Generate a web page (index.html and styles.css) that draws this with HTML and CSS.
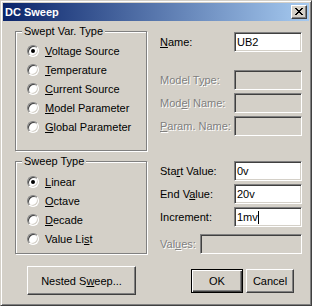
FILE: index.html
```html
<!DOCTYPE html>
<html lang="en">
<head>
  <meta charset="UTF-8" />
  <title>DC Sweep</title>
  <link rel="stylesheet" href="styles.css">
</head>
<body>
  <div class="window">
    <div class="titlebar">
      <span class="title">DC Sweep</span>
      <span class="close">
        <svg width="8" height="7" viewBox="0 0 8 7" shape-rendering="crispEdges">
          <path d="M0 0h2v1h1v1h2v-1h1v-1h2v1h-1v1h-1v1h-1v1h1v1h1v1h1v1h-2v-1h-1v-1h-2v1h-1v1h-2v-1h1v-1h1v-1h1v-1h-1v-1h-1v-1h-1z" fill="#000"/>
        </svg>
      </span>
    </div>
    <div class="client">
      <div class="col-left">
        <div class="group group-var">
          <span class="legend">Swept Var. Type</span>
          <div class="radio-row"><span class="radio checked"></span><span><u>V</u>oltage Source</span></div>
          <div class="radio-row"><span class="radio"></span><span><u>T</u>emperature</span></div>
          <div class="radio-row"><span class="radio"></span><span><u>C</u>urrent Source</span></div>
          <div class="radio-row"><span class="radio"></span><span><u>M</u>odel Parameter</span></div>
          <div class="radio-row"><span class="radio"></span><span><u>G</u>lobal Parameter</span></div>
        </div>
        <div class="group group-sweep">
          <span class="legend">Sweep Type</span>
          <div class="radio-row"><span class="radio checked"></span><span><u>L</u>inear</span></div>
          <div class="radio-row"><span class="radio"></span><span><u>O</u>ctave</span></div>
          <div class="radio-row"><span class="radio"></span><span><u>D</u>ecade</span></div>
          <div class="radio-row"><span class="radio"></span><span>Value Li<u>s</u>t</span></div>
        </div>
        <button class="btn btn-nested" type="button">Nested S<u>w</u>eep...</button>
      </div>
      <div class="col-right">
        <div class="field field-name"><span class="lbl"><u>N</u>ame:</span><span class="edit">UB2</span></div>
        <div class="field field-mtype disabled"><span class="lbl">Model T<u>y</u>pe:</span><span class="edit"></span></div>
        <div class="field disabled"><span class="lbl">Mod<u>e</u>l Name:</span><span class="edit"></span></div>
        <div class="field disabled"><span class="lbl"><u>P</u>aram. Name:</span><span class="edit"></span></div>
        <div class="field field-start"><span class="lbl">Sta<u>r</u>t Value:</span><span class="edit">0v</span></div>
        <div class="field"><span class="lbl">End V<u>a</u>lue:</span><span class="edit">20v</span></div>
        <div class="field"><span class="lbl">Increment:</span><span class="edit">1mv<span class="caret"></span></span></div>
        <div class="field field-values disabled"><span class="lbl">Val<u>u</u>es:</span><span class="edit edit-wide"></span></div>
        <div class="actions">
          <button class="btn btn-default btn-ok" type="button">OK</button>
          <button class="btn btn-cancel" type="button">Cancel</button>
        </div>
      </div>
    </div>
  </div>
</body>
</html>
```

FILE: styles.css
```css
html, body {
  margin: 0;
  padding: 0;
  background: #d4d0c8;
}
body {
  font-family: "Liberation Sans", Arial, sans-serif;
  font-size: 11px;
  color: #000;
}
.window {
  width: 312px;
  height: 306px;
  box-sizing: border-box;
  background: #d4d0c8;
  border: 1px solid;
  border-color: #d4d0c8 #404040 #404040 #d4d0c8;
  box-shadow: inset 1px 1px 0 #fff, inset -1px -1px 0 #808080;
  padding: 2px;
}
.titlebar {
  height: 18px;
  display: flex;
  align-items: center;
  justify-content: space-between;
  padding: 0 2px;
  background: linear-gradient(90deg, #0a246a 0%, #a6caf0 100%);
}
.title {
  color: #fff;
  font-weight: bold;
  font-size: 11px;
}
.close {
  width: 16px;
  height: 14px;
  box-sizing: border-box;
  display: flex;
  align-items: center;
  justify-content: center;
  background: #d4d0c8;
  border: 1px solid;
  border-color: #fff #404040 #404040 #fff;
  box-shadow: inset -1px -1px 0 #808080;
  padding-bottom: 1px;
}
.close svg {
  display: block;
}
.client {
  display: flex;
  padding-left: 12px;
}
.col-left {
  width: 132px;
  display: flex;
  flex-direction: column;
}
.group {
  position: relative;
  box-sizing: border-box;
  border: 1px solid #808080;
  box-shadow: inset 1px 1px 0 #fff, 1px 1px 0 #fff;
  padding-left: 11px;
}
.group-var {
  margin-top: 10px;
  height: 120px;
  padding-top: 9px;
}
.group-sweep {
  margin-top: 10px;
  height: 93px;
  padding-top: 10px;
}
.legend {
  position: absolute;
  top: -7px;
  left: 6px;
  padding: 0 2px;
  background: #d4d0c8;
  line-height: 13px;
}
.radio-row {
  height: 19px;
  display: flex;
  align-items: center;
  gap: 6px;
}
.radio {
  position: relative;
  width: 12px;
  height: 12px;
  box-sizing: border-box;
  border-radius: 50%;
  border: 1px solid;
  border-color: #808080 #fff #fff #808080;
  box-shadow: inset 1px 1px 0 #404040, inset -1px -1px 0 #d4d0c8;
  background: #fff;
}
.radio.checked::after {
  content: "";
  position: absolute;
  left: 3px;
  top: 3px;
  width: 4px;
  height: 4px;
  border-radius: 50%;
  background: #000;
}
.btn {
  font-family: inherit;
  font-size: 11px;
  color: #000;
  background: #d4d0c8;
  box-sizing: border-box;
  border: 1px solid;
  border-color: #fff #404040 #404040 #fff;
  box-shadow: inset -1px -1px 0 #808080;
  padding: 0;
  margin: 0;
}
.btn-nested {
  margin: 12px 0 0 12px;
  width: 109px;
  height: 29px;
}
.col-right {
  width: 142px;
  margin-left: 13px;
  display: flex;
  flex-direction: column;
}
.field {
  height: 20px;
  display: flex;
  align-items: center;
  justify-content: space-between;
  margin-top: 3px;
}
.field-name {
  margin-top: 11px;
}
.field-mtype {
  margin-top: 18px;
}
.field-start {
  margin-top: 25px;
}
.field-values {
  margin-top: 7px;
}
.edit {
  width: 68px;
  height: 20px;
  box-sizing: border-box;
  border: 1px solid;
  border-color: #808080 #fff #fff #808080;
  box-shadow: inset 1px 1px 0 #404040, inset -1px -1px 0 #d4d0c8;
  background: #fff;
  padding-left: 2px;
  line-height: 18px;
  display: flex;
  align-items: center;
}
.edit-wide {
  width: 102px;
}
.caret {
  display: inline-block;
  width: 1px;
  height: 13px;
  background: #000;
}
.disabled .lbl {
  color: #808080;
  text-shadow: 1px 1px 0 #fff;
}
.disabled .edit {
  background: #d4d0c8;
}
.actions {
  display: flex;
  justify-content: flex-end;
  gap: 3px;
  margin-top: 15px;
  padding-right: 8px;
}
.btn-ok {
  width: 52px;
  height: 24px;
}
.btn-cancel {
  width: 48px;
  height: 24px;
}
.btn-default {
  border: 1px solid #000;
  box-shadow: inset 1px 1px 0 #fff, inset -1px -1px 0 #404040, inset -2px -2px 0 #808080;
}
```
